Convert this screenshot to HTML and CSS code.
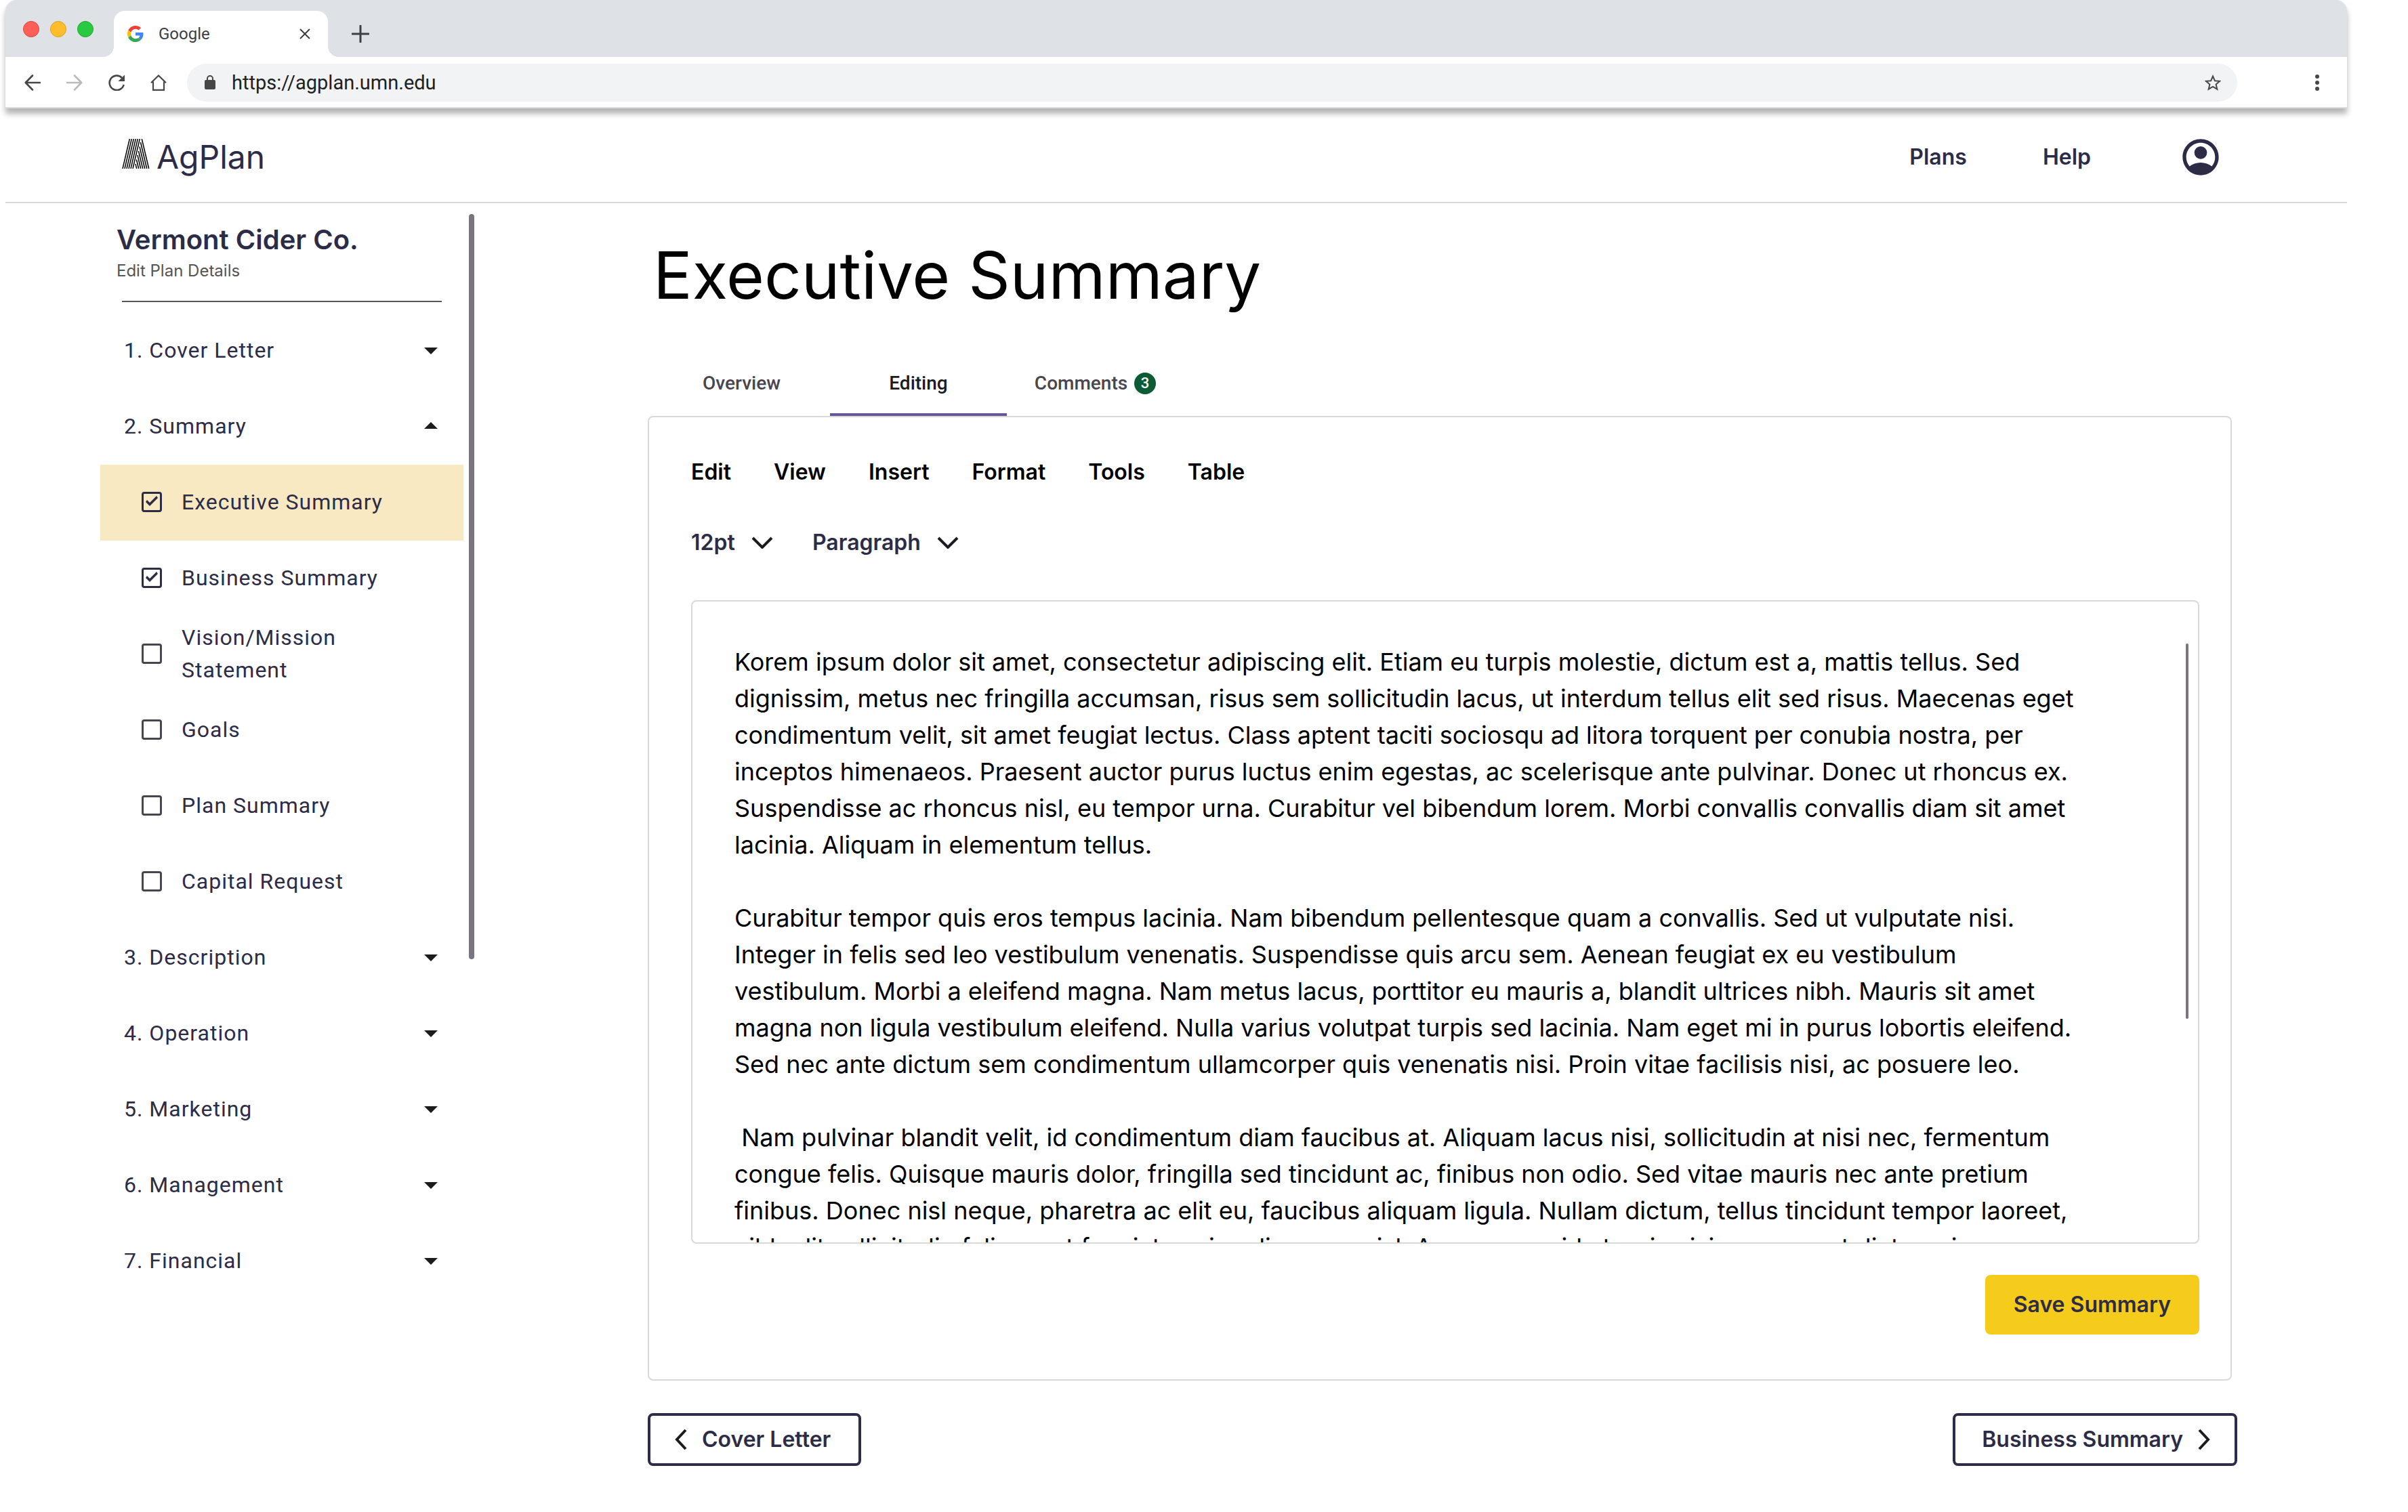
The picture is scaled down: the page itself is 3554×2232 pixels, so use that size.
FILE: index.html
```html
<!DOCTYPE html>
<html lang="en">
<head>
<meta charset="utf-8">
<meta name="viewport" content="width=device-width, initial-scale=1">
<title>AgPlan – Executive Summary</title>
<link rel="stylesheet" href="styles.css">
</head>
<body>
<div class="window">
  <div class="chrome">
    <div class="tabstrip">
      <div class="lights">
        <span class="light light-close"></span>
        <span class="light light-min"></span>
        <span class="light light-max"></span>
      </div>
      <div class="browser-tab">
        <svg width="24" height="24" viewBox="0 0 48 48" aria-hidden="true">
          <path fill="#ea4335" d="M24 9.5c3.54 0 6.71 1.22 9.21 3.6l6.85-6.85C35.9 2.38 30.47 0 24 0 14.62 0 6.51 5.38 2.56 13.22l7.98 6.19C12.43 13.72 17.74 9.5 24 9.5z"/>
          <path fill="#4285f4" d="M46.98 24.55c0-1.57-.15-3.09-.38-4.55H24v9.02h12.94c-.58 2.96-2.26 5.48-4.78 7.18l7.73 6c4.51-4.18 7.09-10.36 7.09-17.65z"/>
          <path fill="#fbbc05" d="M10.53 28.59c-.48-1.45-.76-2.99-.76-4.59s.27-3.14.76-4.59l-7.98-6.19C.92 16.46 0 20.12 0 24c0 3.88.92 7.54 2.56 10.78l7.97-6.19z"/>
          <path fill="#34a853" d="M24 48c6.48 0 11.93-2.13 15.89-5.81l-7.73-6c-2.15 1.45-4.92 2.3-8.16 2.3-6.26 0-11.57-4.22-13.47-9.91l-7.98 6.19C6.51 42.62 14.62 48 24 48z"/>
        </svg>
        <span class="browser-tab-title">Google</span>
        <button class="icon-button" type="button" aria-label="Close tab">
          <svg width="16" height="16" viewBox="0 0 16 16"><path d="M1 1l14 14M15 1L1 15" stroke="#3c4043" stroke-width="2" fill="none"/></svg>
        </button>
      </div>
      <button class="icon-button" type="button" aria-label="New tab">
        <svg width="26" height="26" viewBox="0 0 26 26"><path d="M13 1v24M1 13h24" stroke="#3c4043" stroke-width="3" stroke-linecap="round" fill="none"/></svg>
      </button>
    </div>
    <div class="toolbar">
      <div class="toolbar-nav">
        <button class="icon-button" type="button" aria-label="Back">
          <svg width="24" height="24" viewBox="0 0 24 24"><path d="M12 1.500L1.800 12 12 22.500M2 12h21" stroke="#474747" stroke-width="2.600" stroke-linecap="round" stroke-linejoin="round" fill="none"/></svg>
        </button>
        <button class="icon-button" type="button" aria-label="Forward">
          <svg width="24" height="24" viewBox="0 0 24 24"><path d="M12 1.500L22.200 12 12 22.500M22 12H1" stroke="#bababa" stroke-width="2.600" stroke-linecap="round" stroke-linejoin="round" fill="none"/></svg>
        </button>
        <button class="icon-button" type="button" aria-label="Reload">
          <svg width="24" height="24" viewBox="0 0 24 24"><path d="M22.700 15A10.700 10.700 0 1 1 20 4.800" stroke="#474747" stroke-width="2.600" fill="none"/><path d="M24 .5V10h-9.500z" fill="#474747"/></svg>
        </button>
        <button class="icon-button" type="button" aria-label="Home">
          <svg width="24" height="24" viewBox="0 0 24 24"><path d="M1 12.300L12 1.500l11 10.800M4 10.500v12.300h16V10.500" stroke="#474747" stroke-width="2.200" fill="none"/></svg>
        </button>
      </div>
      <div class="omnibox">
        <svg width="16" height="24" viewBox="0 0 16 24" aria-hidden="true"><rect y="8" width="16" height="14" rx="2" fill="#474747"/><path d="M4 9V6a4 4 0 0 1 8 0v3" stroke="#474747" stroke-width="2" fill="none"/></svg>
        <input class="omnibox-input" type="text" aria-label="Address" value="https://agplan.umn.edu">
        <button class="icon-button" type="button" aria-label="Bookmark">
          <svg width="24" height="24" viewBox="0 0 24 24"><path d="M12 2.500l2.900 6.700 7.300.6-5.600 4.800 1.700 7.100-6.300-3.800-6.300 3.800 1.700-7.100-5.600-4.800 7.300-.6z" stroke="#474747" stroke-width="2" fill="none"/></svg>
        </button>
      </div>
      <button class="icon-button toolbar-menu" type="button" aria-label="Menu">
        <svg width="6" height="24" viewBox="0 0 6 24" fill="#474747"><circle cx="3" cy="3" r="3"/><circle cx="3" cy="12" r="3"/><circle cx="3" cy="21" r="3"/></svg>
      </button>
    </div>
  </div>

  <header class="site-header">
    <a class="brand" href="#">
      <svg width="41" height="44" viewBox="0 0 41 44" aria-hidden="true" stroke="#000" stroke-width="1.500" fill="none">
        <path d="M11.300 0L1 44M14.300 0L4 44M17.300 0L7 44M20.300 0L10 44M23.300 0L13 44M26.300 0L16 44"/>
        <path d="M29.300 0L39.700 44M27.500 5L36.700 44M26 11.500L33.700 44M24.500 18L30.700 44M23 24L27.700 44M21.400 30.500L24.700 44M20 37L21.700 44"/>
      </svg>
      <span>AgPlan</span>
    </a>
    <nav class="site-nav" aria-label="Main">
      <a href="#">Plans</a>
      <a href="#">Help</a>
      <a class="account" href="#" aria-label="Account">
        <svg width="64" height="64" viewBox="0 0 24 24"><path fill="#2d2c47" d="M12 2C6.480 2 2 6.480 2 12s4.480 10 10 10 10-4.480 10-10S17.520 2 12 2zM5.850 17.100C4.700 15.700 4 13.930 4 12c0-4.410 3.590-8 8-8s8 3.590 8 8c0 1.930-.7 3.700-1.850 5.100C16.500 15.800 14.350 15 12 15s-4.500.8-6.150 2.100z"/><circle cx="12" cy="9.500" r="3.500" fill="#2d2c47"/></svg>
      </a>
    </nav>
  </header>

  <div class="layout">
    <aside class="sidebar">
      <div class="sidebar-content">
        <h2 class="plan-name">Vermont Cider Co.</h2>
        <a class="plan-edit" href="#">Edit Plan Details</a>
        <hr class="divider">
        <ul class="outline">
          <li><button class="section" type="button" aria-expanded="false">1. Cover Letter<svg class="caret" viewBox="0 0 24 24"><path d="M7 10l5 5 5-5z"/></svg></button></li>
          <li><button class="section" type="button" aria-expanded="true">2. Summary<svg class="caret" viewBox="0 0 24 24"><path d="M7 14l5-5 5 5z"/></svg></button>
            <ul class="outline">
              <li><label class="step step-current"><input type="checkbox" checked>Executive Summary</label></li>
              <li><label class="step"><input type="checkbox" checked>Business Summary</label></li>
              <li><label class="step"><input type="checkbox">Vision/Mission Statement</label></li>
              <li><label class="step"><input type="checkbox">Goals</label></li>
              <li><label class="step"><input type="checkbox">Plan Summary</label></li>
              <li><label class="step"><input type="checkbox">Capital Request</label></li>
            </ul>
          </li>
          <li><button class="section" type="button" aria-expanded="false">3. Description<svg class="caret" viewBox="0 0 24 24"><path d="M7 10l5 5 5-5z"/></svg></button></li>
          <li><button class="section" type="button" aria-expanded="false">4. Operation<svg class="caret" viewBox="0 0 24 24"><path d="M7 10l5 5 5-5z"/></svg></button></li>
          <li><button class="section" type="button" aria-expanded="false">5. Marketing<svg class="caret" viewBox="0 0 24 24"><path d="M7 10l5 5 5-5z"/></svg></button></li>
          <li><button class="section" type="button" aria-expanded="false">6. Management<svg class="caret" viewBox="0 0 24 24"><path d="M7 10l5 5 5-5z"/></svg></button></li>
          <li><button class="section" type="button" aria-expanded="false">7. Financial<svg class="caret" viewBox="0 0 24 24"><path d="M7 10l5 5 5-5z"/></svg></button></li>
        </ul>
      </div>
      <div class="sidebar-scroll"></div>
    </aside>

    <main class="main">
      <h1 class="page-title">Executive Summary</h1>
      <div class="tabs" role="tablist">
        <button class="tab" type="button" role="tab">Overview</button>
        <button class="tab tab-active" type="button" role="tab" aria-selected="true">Editing</button>
        <button class="tab" type="button" role="tab">Comments<span class="badge">3</span></button>
      </div>
      <section class="panel">
        <div class="menu">
          <button type="button">Edit</button>
          <button type="button">View</button>
          <button type="button">Insert</button>
          <button type="button">Format</button>
          <button type="button">Tools</button>
          <button type="button">Table</button>
        </div>
        <div class="pickers">
          <label class="picker"><select aria-label="Font size"><option>12pt</option></select><svg width="32" height="18" viewBox="0 0 32 18"><path d="M2 2l14 14L30 2" stroke="#1c1b1f" stroke-width="4" fill="none"/></svg></label>
          <label class="picker"><select aria-label="Text style"><option>Paragraph</option></select><svg width="32" height="18" viewBox="0 0 32 18"><path d="M2 2l14 14L30 2" stroke="#1c1b1f" stroke-width="4" fill="none"/></svg></label>
        </div>
        <div class="editor">
          <textarea class="editor-text" aria-label="Executive summary text" spellcheck="false">Korem ipsum dolor sit amet, consectetur adipiscing elit. Etiam eu turpis molestie, dictum est a, mattis tellus. Sed dignissim, metus nec fringilla accumsan, risus sem sollicitudin lacus, ut interdum tellus elit sed risus. Maecenas eget condimentum velit, sit amet feugiat lectus. Class aptent taciti sociosqu ad litora torquent per conubia nostra, per inceptos himenaeos. Praesent auctor purus luctus enim egestas, ac scelerisque ante pulvinar. Donec ut rhoncus ex. Suspendisse ac rhoncus nisl, eu tempor urna. Curabitur vel bibendum lorem. Morbi convallis convallis diam sit amet lacinia. Aliquam in elementum tellus.

Curabitur tempor quis eros tempus lacinia. Nam bibendum pellentesque quam a convallis. Sed ut vulputate nisi. Integer in felis sed leo vestibulum venenatis. Suspendisse quis arcu sem. Aenean feugiat ex eu vestibulum vestibulum. Morbi a eleifend magna. Nam metus lacus, porttitor eu mauris a, blandit ultrices nibh. Mauris sit amet magna non ligula vestibulum eleifend. Nulla varius volutpat turpis sed lacinia. Nam eget mi in purus lobortis eleifend. Sed nec ante dictum sem condimentum ullamcorper quis venenatis nisi. Proin vitae facilisis nisi, ac posuere leo.

 Nam pulvinar blandit velit, id condimentum diam faucibus at. Aliquam lacus nisi, sollicitudin at nisi nec, fermentum congue felis. Quisque mauris dolor, fringilla sed tincidunt ac, finibus non odio. Sed vitae mauris nec ante pretium finibus. Donec nisl neque, pharetra ac elit eu, faucibus aliquam ligula. Nullam dictum, tellus tincidunt tempor laoreet, nibh elit sollicitudin felis, eget feugiat sapien diam nec nisl. Aenean gravida turpis nisi, consequat dictum risus dapibus a.</textarea>
          <div class="editor-scroll"></div>
        </div>
        <div class="actions">
          <button class="save" type="button">Save Summary</button>
        </div>
      </section>
      <nav class="pager" aria-label="Sections">
        <a class="pager-link pager-prev" href="#"><svg width="18" height="32" viewBox="0 0 18 32"><path d="M16 2L3 16l13 14" stroke="#1c1b1f" stroke-width="4" fill="none"/></svg>Cover Letter</a>
        <a class="pager-link pager-next" href="#">Business Summary<svg width="18" height="32" viewBox="0 0 18 32"><path d="M2 2l13 14L2 30" stroke="#1c1b1f" stroke-width="4" fill="none"/></svg></a>
      </nav>
    </main>
  </div>
</div>
</body>
</html>
```
FILE: styles.css
```css
:root {
  --ink: #2d2c47;
  --line: #d9d9d9;
  --scroll: #79747e;
  --ui: Inter, "Liberation Sans", sans-serif;
  --material: Roboto, "Liberation Sans", sans-serif;
}

* { box-sizing: border-box; }

body {
  margin: 0;
  background: #fff;
  color: #000;
  font-family: var(--ui);
  font-size: 32px;
  line-height: 40px;
}

button, input, select, textarea {
  margin: 0;
  padding: 0;
  border: 0;
  background: none;
  color: inherit;
  font: inherit;
  outline: 0;
}

a { color: inherit; text-decoration: none; }
svg { display: block; flex: none; }

.window { margin: 0 90px 0 8px; }

/* Browser frame */
.chrome {
  border-radius: 16px 16px 0 0;
  border-bottom: 2px solid #dadce0;
  background: #fff;
  box-shadow: 0 8px 8px rgba(0, 0, 0, .3);
  font-family: var(--material);
}

.tabstrip {
  display: flex;
  align-items: center;
  height: 84px;
  padding: 16px 26px 0;
  border-radius: 16px 16px 0 0;
  background: #dee1e6;
}

.lights {
  display: flex;
  gap: 16px;
  margin: 0 30px 14px 0;
}

.light {
  width: 24px;
  height: 24px;
  border: 1px solid #e0443e;
  border-radius: 50%;
  background: #ff5f57;
}
.light-min { border-color: #dea123; background: #ffbd2e; }
.light-max { border-color: #1aab29; background: #28ca42; }

.browser-tab {
  position: relative;
  display: flex;
  align-items: center;
  gap: 22px;
  width: 316px;
  height: 68px;
  margin-right: 35px;
  padding: 0 26px 0 20px;
  border-radius: 16px 16px 0 0;
  background: #fff;
}

.browser-tab::before,
.browser-tab::after {
  content: "";
  position: absolute;
  bottom: 0;
  width: 16px;
  height: 16px;
}
.browser-tab::before {
  right: 100%;
  background: radial-gradient(circle at 0 0, transparent 16px, #fff 16px);
}
.browser-tab::after {
  left: 100%;
  background: radial-gradient(circle at 100% 0, transparent 16px, #fff 16px);
}

.browser-tab-title {
  flex: 1;
  color: #3c4043;
  font-size: 24px;
}

.icon-button { display: block; flex: none; }

.toolbar {
  display: flex;
  align-items: center;
  padding: 10px 41px 8px 28px;
}

.toolbar-nav {
  display: flex;
  gap: 38px;
  margin-right: 30px;
}

.omnibox {
  display: flex;
  flex: 1;
  align-items: center;
  gap: 24px;
  height: 56px;
  padding: 0 24px 0 26px;
  border-radius: 28px;
  background: #f1f3f4;
}

.omnibox-input {
  flex: 1;
  min-width: 0;
  color: #202124;
  font-size: 29px;
}

.toolbar-menu { margin-left: 115px; }

/* Site header */
.site-header {
  display: flex;
  justify-content: space-between;
  padding: 40px 184px 34px 172px;
  border-bottom: 2px solid var(--line);
  color: var(--ink);
}

.brand {
  display: flex;
  align-items: baseline;
  gap: 10px;
  font-size: 48px;
  line-height: 64px;
}

.site-nav {
  display: flex;
  align-items: center;
  gap: 112px;
  font-weight: 600;
}

.account { margin-left: 18px; }

.layout {
  display: grid;
  grid-template-columns: 552px minmax(0, 1fr);
  gap: 256px;
  padding: 0 162px 68px 140px;
}

/* Sidebar */
.sidebar {
  display: grid;
  grid-template-columns: 1fr 8px;
  gap: 8px;
  align-items: start;
  padding-top: 16px;
}

.sidebar-content {
  padding-top: 12px;
  color: var(--ink);
}

.sidebar-scroll {
  height: 1100px;
  border-radius: 4px;
  background: var(--scroll);
}

.plan-name {
  margin: 0 0 0 24px;
  font-size: 40px;
  font-weight: 600;
  line-height: 52px;
}

.plan-edit {
  display: block;
  margin-left: 24px;
  color: #555;
  font-size: 24px;
}

.divider {
  margin: 24px 32px 16px;
  border: 0;
  border-top: 2px solid #555;
}

.outline {
  margin: 0;
  padding: 0;
  list-style: none;
  font-family: var(--material);
  letter-spacing: 1px;
}

.section, .step {
  display: flex;
  align-items: center;
  width: 100%;
  height: 112px;
  padding-bottom: 2px;
  line-height: 48px;
}

.section {
  justify-content: space-between;
  padding-right: 24px;
  padding-left: 35px;
  letter-spacing: inherit;
}

.caret {
  width: 48px;
  height: 48px;
  fill: #1c1b1f;
}

.step {
  gap: 29px;
  padding-right: 40px;
  padding-left: 61px;
}
.step-current { background: #f8e9c3; }

.step input {
  flex: none;
  width: 30px;
  height: 30px;
  border: 3px solid #49454f;
  border-radius: 4px;
  appearance: none;
}
.step input:checked { border-color: var(--ink); }
.step input:checked::before {
  content: "";
  display: block;
  height: 24px;
  background: var(--ink);
  clip-path: polygon(3px 12px, 5px 9px, 9px 13px, 19px 3px, 21px 6px, 9px 18px);
}

/* Main column */
.main { padding-top: 46px; }

.page-title {
  margin: 0 0 52px 8px;
  font-size: 96px;
  font-weight: 400;
  line-height: 120px;
}

.tabs {
  display: flex;
  padding-left: 8px;
  font-family: var(--material);
  font-size: 28px;
  font-weight: 500;
}

.tab {
  display: flex;
  align-items: center;
  justify-content: center;
  gap: 10px;
  width: 261px;
  height: 96px;
  border: solid transparent;
  border-width: 4px 0;
  color: #49454f;
}
.tab-active {
  border-bottom-color: #685496;
  color: #1c1b1f;
}

.badge {
  width: 32px;
  border-radius: 50%;
  background: #0b5c35;
  color: #fff;
  font-size: 22px;
  line-height: 32px;
  text-align: center;
}

.panel {
  margin-right: 8px;
  padding: 61px 46px 66px 62px;
  border: 2px solid var(--line);
  border-radius: 8px;
  font-weight: 600;
}

.menu {
  display: flex;
  gap: 63px;
  margin-bottom: 64px;
}

.pickers {
  display: flex;
  gap: 58px;
  margin-bottom: 65px;
  color: var(--ink);
}

.picker {
  display: flex;
  align-items: center;
  gap: 24px;
}
.picker select { appearance: none; }

.editor { position: relative; }

.editor-text {
  display: block;
  width: 100%;
  height: 950px;
  padding: 62px 172px 0 62px;
  border: 2px solid var(--line);
  border-radius: 8px;
  overflow: hidden;
  resize: none;
  font-size: 36px;
  font-weight: 400;
  line-height: 54px;
}

/* Scroll thumb floats over the text area */
.editor-scroll {
  position: absolute;
  top: 64px;
  right: 16px;
  width: 4px;
  height: 554px;
  border-radius: 2px;
  background: var(--scroll);
}

.actions {
  display: flex;
  justify-content: flex-end;
  margin-top: 46px;
}

.save {
  padding: 24px 42px;
  border-radius: 8px;
  background: #f5cc1b;
  color: var(--ink);
}

.pager {
  display: flex;
  justify-content: space-between;
  margin-top: 48px;
}

.pager-link {
  display: flex;
  align-items: center;
  gap: 22px;
  padding: 15px 36px;
  border: 4px solid var(--ink);
  border-radius: 8px;
  color: var(--ink);
  font-weight: 600;
}
.pager-prev { padding-right: 41px; }
.pager-next { padding-left: 39px; }
```
